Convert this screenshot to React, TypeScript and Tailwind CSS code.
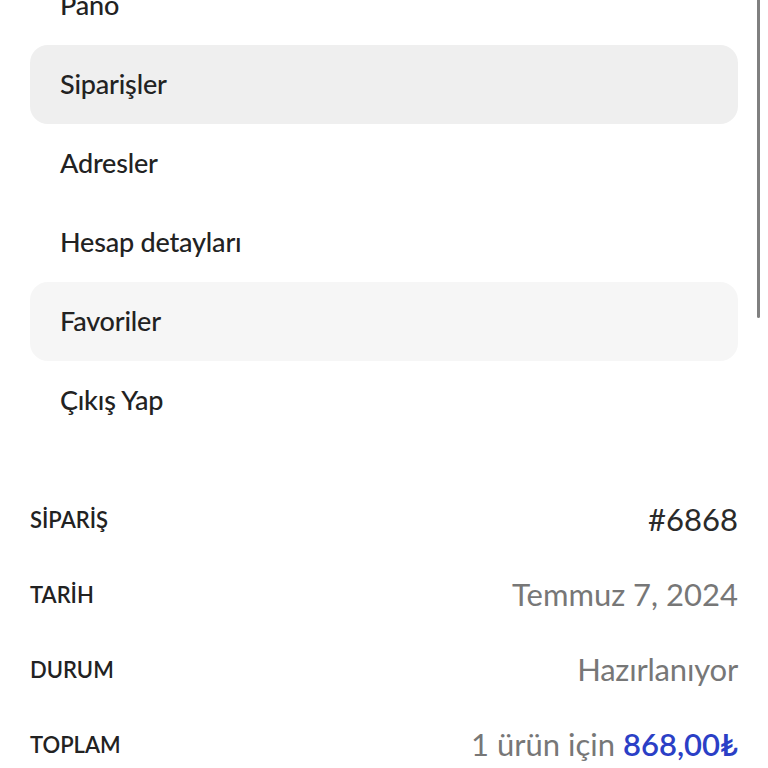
import React from 'react'

const menu = [
  { label: 'Pano', bg: '' },
  { label: 'Siparişler', bg: 'bg-[#efefef]' },
  { label: 'Adresler', bg: '' },
  { label: 'Hesap detayları', bg: '' },
  { label: 'Favoriler', bg: 'bg-[#f6f6f6]' },
  { label: 'Çıkış Yap', bg: '' },
]

export default function App() {
  return (
    <div className="relative h-[768px] w-[768px] overflow-hidden bg-white font-['Lato',sans-serif] text-[#222]">
      {/* scrollbar */}
      <div className="absolute right-[8px] top-0 h-[318px] w-[3px] rounded-b-full bg-[#808080]"></div>

      <nav className="-mt-[34px] px-[30px]">
        <ul>
          {menu.map((item) => (
            <li
              key={item.label}
              className={`flex h-[79px] items-center rounded-[18px] pl-[30px] text-[27px] font-medium tracking-[-0.2px] ${item.bg}`}
            >
              {item.label}
            </li>
          ))}
        </ul>
      </nav>

      <div className="mt-[42px] px-[30px]">
        <div className="flex h-[75px] items-center justify-between">
          <span className="text-[22px] font-semibold">SİPARİŞ</span>
          <span className="text-[31px] text-[#2a2a2a]">#6868</span>
        </div>
        <div className="flex h-[75px] items-center justify-between">
          <span className="text-[22px] font-semibold">TARİH</span>
          <span className="text-[31px] text-[#777]">Temmuz 7, 2024</span>
        </div>
        <div className="flex h-[75px] items-center justify-between">
          <span className="text-[22px] font-semibold">DURUM</span>
          <span className="text-[31px] text-[#777] tracking-[-0.2px]">Hazırlanıyor</span>
        </div>
        <div className="flex h-[75px] items-center justify-between">
          <span className="text-[22px] font-semibold">TOPLAM</span>
          <span className="text-[31px] text-[#777]">
            1 ürün için <span className="font-semibold text-[#2b3fc6]">868,00₺</span>
          </span>
        </div>
      </div>
    </div>
  )
}
